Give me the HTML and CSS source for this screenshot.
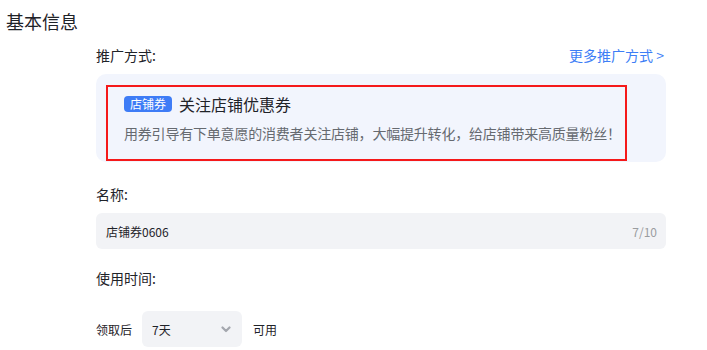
FILE: index.html
```
<!doctype html>
<html>
  <head>
    <meta charset="utf-8">
    <title>基本信息</title>
    <link rel="stylesheet" href="styles.css">
  </head>
  <body>
    <h2 class="section-title">基本信息</h2>
    <div class="form">
      <div class="label-row">
        <span class="label">推广方式:</span>
        <a class="more" href="#">更多推广方式&nbsp;&gt;</a>
      </div>
      <div class="promo-card">
        <div class="promo-picked">
          <div class="promo-head">
            <span class="tag">店铺券</span>
            <span class="promo-name">关注店铺优惠券</span>
          </div>
          <p class="promo-desc">用券引导有下单意愿的消费者关注店铺，大幅提升转化，给店铺带来高质量粉丝！</p>
        </div>
      </div>

      <div class="label-row name-row"><span class="label">名称:</span></div>
      <div class="input">
        <span>店铺券0606</span>
        <span class="count">7/10</span>
      </div>

      <div class="label-row time-row"><span class="label">使用时间:</span></div>
      <div class="time-line">
        <span>领取后</span>
        <div class="select">
          <span>7天</span>
          <svg width="10" height="7" viewBox="0 0 10 7"><path d="M1.5 1.5 L5 5 L8.5 1.5" fill="none" stroke="#a4a7ae" stroke-width="2.2" stroke-linecap="round" stroke-linejoin="round"/></svg>
        </div>
        <span>可用</span>
      </div>
    </div>
  </body>
</html>
```

FILE: styles.css
```
body { margin: 0; font-family: "Noto Sans CJK SC", "Noto Sans", sans-serif; color: #1f2329; background: #fff; }
.section-title { margin: 0; padding: 9px 0 0 6px; font-size: 18px; font-weight: normal; line-height: 24px; }
.form { margin-left: 96px; width: 570px; }
.label-row { display: flex; justify-content: space-between; align-items: center; height: 20px; margin-top: 12px; }
.label { font-size: 14px; line-height: 20px; }
.more { color: #3d7ef6; font-size: 14px; text-decoration: none; margin-right: 2px; }
.promo-card { margin-top: 9px; background: #f2f5fd; border-radius: 10px; padding: 11px 10px 1px 10px; }
.promo-picked { width: 521px; box-sizing: border-box; border: 2px solid #f5191a; padding: 7px 6px 16px 16px; }
.promo-head { display: flex; align-items: center; height: 20px; }
.tag { background: #3e7cf6; color: #fff; font-size: 12px; line-height: 16px; padding: 0 6px; border-radius: 4px; margin-right: 7px; }
.promo-name { font-size: 16px; line-height: 20px; }
.promo-desc { margin: 9px 0 0 0; font-size: 14px; letter-spacing: -0.2px; line-height: 20px; color: #666a70; white-space: nowrap; }
.name-row { margin-top: 22px; }
.input { margin-top: 9px; height: 36px; background: #f2f3f6; border-radius: 6px; display: flex; justify-content: space-between; align-items: center; padding: 0 9px 0 10px; font-size: 12px; }
.count { color: #9a9ca0; }
.time-row { margin-top: 19px; }
.time-line { margin-top: 23px; display: flex; align-items: center; font-size: 12px; height: 36px; }
.select { margin: 0 11px 0 10px; width: 100px; height: 36px; box-sizing: border-box; background: #f2f3f6; border-radius: 6px; display: flex; justify-content: space-between; align-items: center; padding: 0 11px 0 10px; }
```
